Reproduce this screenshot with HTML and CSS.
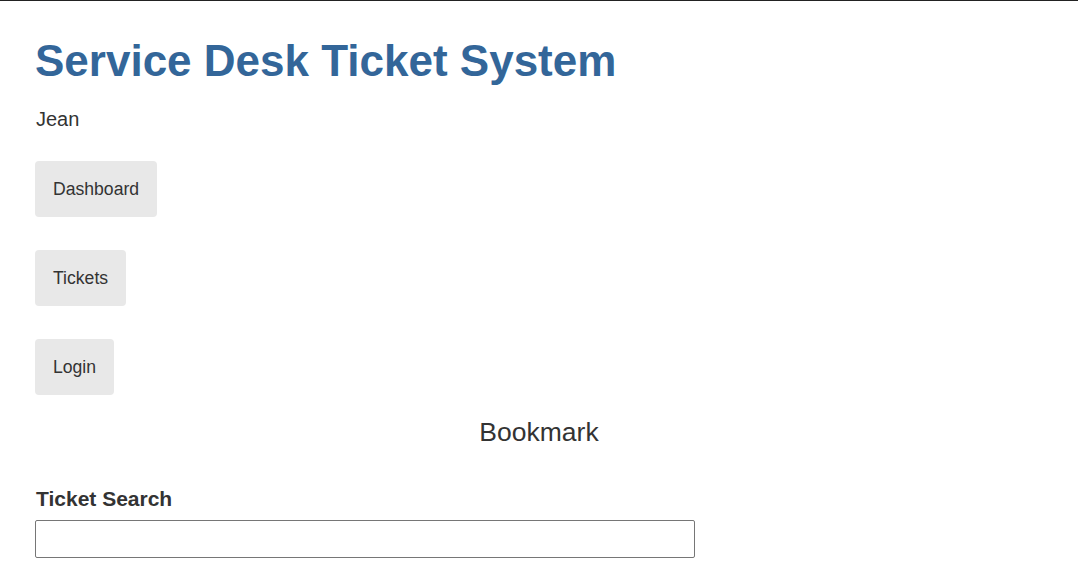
FILE: index.html
```html
<!DOCTYPE html>
<html>
<head>
<meta charset="utf-8">
<title>Service Desk Ticket System</title>
<link rel="stylesheet" href="styles.css">
</head>
<body>
<div class="page">
  <h1 class="title">Service Desk Ticket System</h1>
  <div class="user">Jean</div>
  <nav class="nav">
    <a class="nav-btn" href="#">Dashboard</a>
    <a class="nav-btn" href="#">Tickets</a>
    <a class="nav-btn" href="#">Login</a>
  </nav>
  <div class="bookmark">Bookmark</div>
  <form class="search">
    <label class="search-label" for="q">Ticket Search</label>
    <input class="search-input" id="q" type="text">
  </form>
</div>
</body>
</html>
```

FILE: styles.css
```css
html, body {
  margin: 0;
  padding: 0;
  background: #fff;
}
body {
  border-top: 1px solid #222;
  font-family: "Liberation Sans", Arial, sans-serif;
  color: #333;
}
.page {
  display: flex;
  flex-direction: column;
  align-items: flex-start;
  padding: 35px 35px 0 35px;
}
.title {
  margin: 0;
  font-size: 44px;
  line-height: 50px;
  font-weight: bold;
  color: #336699;
}
.user {
  margin-top: 22px;
  margin-left: 1px;
  font-size: 20px;
  line-height: 23px;
}
.nav {
  margin-top: 30px;
  display: flex;
  flex-direction: column;
  align-items: flex-start;
  gap: 33px;
}
.nav-btn {
  display: block;
  background: #e8e8e8;
  border-radius: 4px;
  padding: 18px 18px;
  font-size: 17.6px;
  line-height: 20px;
  color: #333;
  text-decoration: none;
}
.bookmark {
  align-self: center;
  margin-top: 22px;
  font-size: 26.5px;
  line-height: 30px;
}
.search {
  margin-top: 40px;
  display: flex;
  flex-direction: column;
  align-items: flex-start;
}
.search-label {
  font-size: 21px;
  line-height: 24px;
  font-weight: bold;
  margin-left: 1px;
  margin-bottom: 9px;
}
.search-input {
  width: 660px;
  height: 38px;
  box-sizing: border-box;
  border: 1px solid #767676;
  border-radius: 2px;
  margin: 0;
  font-size: 16px;
}
```
